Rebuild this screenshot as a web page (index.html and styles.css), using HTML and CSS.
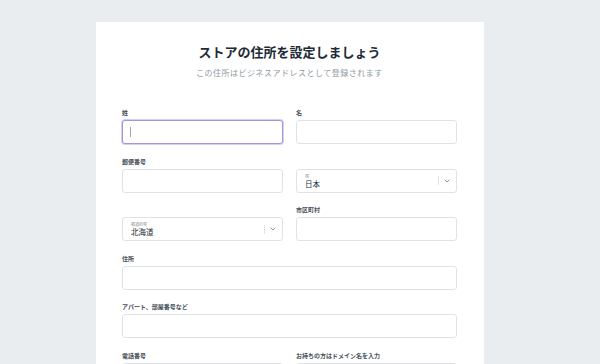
FILE: index.html
```html
<!DOCTYPE html>
<html lang="ja">
<head>
  <meta charset="UTF-8">
  <meta name="viewport" content="width=device-width, initial-scale=1">
  <title>ストアの住所を設定しましょう</title>
  <link rel="stylesheet" href="styles.css">
</head>
<body>
  <main class="card">
    <header class="card-head">
      <h1 class="card-title">ストアの住所を設定しましょう</h1>
      <p class="card-sub">この住所はビジネスアドレスとして登録されます</p>
    </header>

    <form class="address-form">
      <div class="field">
        <label class="field-label">姓</label>
        <div class="text-box is-focus">
          <input class="text-input" type="text">
          <span class="caret"></span>
        </div>
      </div>
      <div class="field">
        <label class="field-label">名</label>
        <div class="text-box"><input class="text-input" type="text"></div>
      </div>

      <div class="field">
        <label class="field-label">郵便番号</label>
        <div class="text-box"><input class="text-input" type="text"></div>
      </div>
      <div class="field">
        <div class="select-box">
          <div class="select-value">
            <span class="select-label">国</span>
            <span class="select-text">日本</span>
          </div>
          <span class="select-sep"></span>
          <svg class="chevron" viewBox="0 0 6 4" width="6" height="4"><path d="M0.7 0.7 L3 3 L5.3 0.7" fill="none" stroke="#7f8a96" stroke-width="0.9"/></svg>
        </div>
      </div>

      <div class="field">
        <div class="select-box">
          <div class="select-value">
            <span class="select-label">都道府県</span>
            <span class="select-text">北海道</span>
          </div>
          <span class="select-sep"></span>
          <svg class="chevron" viewBox="0 0 6 4" width="6" height="4"><path d="M0.7 0.7 L3 3 L5.3 0.7" fill="none" stroke="#7f8a96" stroke-width="0.9"/></svg>
        </div>
      </div>
      <div class="field">
        <label class="field-label">市区町村</label>
        <div class="text-box"><input class="text-input" type="text"></div>
      </div>

      <div class="field wide">
        <label class="field-label">住所</label>
        <div class="text-box"><input class="text-input" type="text"></div>
      </div>

      <div class="field wide">
        <label class="field-label">アパート、部屋番号など</label>
        <div class="text-box"><input class="text-input" type="text"></div>
      </div>

      <div class="field">
        <label class="field-label">電話番号</label>
        <div class="text-box"><input class="text-input" type="text"></div>
      </div>
      <div class="field">
        <label class="field-label">お持ちの方はドメイン名を入力</label>
        <div class="text-box"><input class="text-input" type="text"></div>
      </div>
    </form>
  </main>
</body>
</html>
```

FILE: styles.css
```css
/* Reset */
* {
  margin: 0;
  padding: 0;
  box-sizing: border-box;
}

body {
  font-family: "Noto Sans CJK JP", "Noto Sans", sans-serif;
  background: #e9edf0;
  color: #212b36;
  height: 364px;
  overflow: hidden;
}

/* White card */
.card {
  width: 388px;
  margin: 22px 0 0 96px;
  padding: 21px 27px 40px 26px;
  background: #fff;
  min-height: 400px;
}

.card-head {
  text-align: center;
}
.card-title {
  font-size: 13px;
  line-height: 18px;
  font-weight: bold;
  color: #212b36;
}
.card-sub {
  margin-top: 6px;
  font-size: 8px;
  line-height: 12px;
  letter-spacing: 0.5px;
  color: #919aa3;
}

/* Form grid */
.address-form {
  margin-top: 30px;
  display: grid;
  grid-template-columns: 1fr 1fr;
  column-gap: 13px;
  row-gap: 13.5px;
  align-items: end;
}
.field {
  display: flex;
  flex-direction: column;
}
.field.wide {
  grid-column: 1 / -1;
}
.field-label {
  font-size: 6px;
  line-height: 8px;
  font-weight: bold;
  color: #454e58;
  margin-bottom: 3px;
}

/* Text inputs */
.text-box {
  position: relative;
  height: 24px;
  border: 1px solid #dfe3e8;
  border-radius: 3px;
  background: #fff;
}
.text-box.is-focus {
  border-color: #9d98de;
  box-shadow: 0 0 0 1px rgba(130, 122, 214, 0.35);
}
.text-input {
  width: 100%;
  height: 100%;
  border: none;
  outline: none;
  background: transparent;
  padding: 0 8px;
  font: inherit;
  font-size: 8px;
}
.caret {
  position: absolute;
  left: 7px;
  top: 6px;
  width: 1px;
  height: 10px;
  background: #9ea4aa;
}

/* Selects */
.select-box {
  height: 24px;
  border: 1px solid #dfe3e8;
  border-radius: 3px;
  background: #fff;
  display: flex;
  align-items: center;
  padding: 0 6px 0 8px;
}
.select-value {
  flex: 1;
  display: flex;
  flex-direction: column;
}
.select-label {
  font-size: 4px;
  line-height: 5px;
  color: #8c939b;
}
.select-text {
  font-size: 7.5px;
  line-height: 9px;
  color: #212b36;
}
.select-sep {
  width: 1px;
  height: 9px;
  background: #dfe3e8;
  margin-right: 5px;
}
.chevron {
  display: block;
}
```
